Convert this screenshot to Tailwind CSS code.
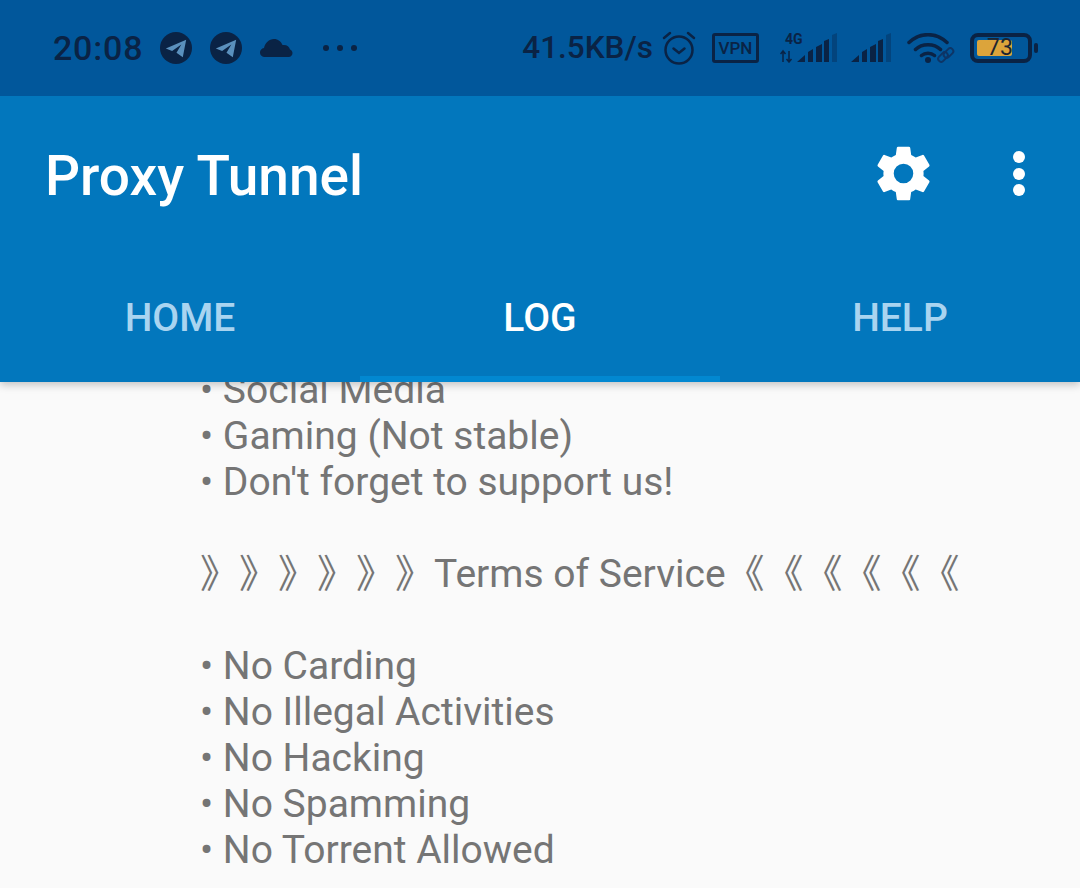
<!DOCTYPE html>
<html lang="en">
<head>
    <meta charset="UTF-8">
    <meta name="viewport" content="width=device-width, initial-scale=1.0">
    <title>Proxy Tunnel</title>
    <script src="https://cdn.jsdelivr.net/npm/@tailwindcss/browser@4"></script>
</head>
<body class="font-[Roboto,'Noto_Sans_CJK_SC',sans-serif] antialiased bg-[#fafafa] w-[1080px] h-[888px] overflow-hidden flex flex-col">
    <!-- Header -->
    <header class="relative z-10 shrink-0 shadow-[0_3px_8px_rgba(0,0,0,0.22)]">
        <!-- Status bar -->
        <div class="h-[96px] bg-[#01579b] flex items-center justify-between pl-[53px] pr-[42px] text-[#0a2345]">
            <div class="flex items-center">
                <span class="w-[89px] text-[34px] font-medium leading-none tracking-[0.8px] whitespace-nowrap">20:08</span>
                <svg class="ml-[18px]" width="32" height="32" viewBox="0 0 33 33"><circle cx="16.5" cy="16.5" r="16.5" fill="#0a2345"/><path d="M6 17 27 8 23.500 26 17 21.500 22 13 12.500 19.500Z" fill="#5a90bd"/></svg>
                <svg class="ml-[18px]" width="32" height="32" viewBox="0 0 33 33"><circle cx="16.5" cy="16.5" r="16.5" fill="#0a2345"/><path d="M6 17 27 8 23.500 26 17 21.500 22 13 12.500 19.500Z" fill="#5a90bd"/></svg>
                <svg class="ml-[18px]" width="33" height="20" viewBox="0 0 33 20"><path d="M5 19a4.500 4.500 0 0 1-1-9C5 5 9 1 14 1c4 0 7 2.500 8.500 6 .5 0 1-.1 1.500-.1 3 0 5.500 2 6 4.600 1.500.5 2.500 2 2.500 3.500 0 2.200-1.500 4-4 4Z" fill="#0a2345"/></svg>
                <div class="ml-[30px] flex gap-[8px]">
                    <span class="w-[6px] h-[6px] rounded-full bg-[#0a2345]"></span>
                    <span class="w-[6px] h-[6px] rounded-full bg-[#0a2345]"></span>
                    <span class="w-[6px] h-[6px] rounded-full bg-[#0a2345]"></span>
                </div>
            </div>
            <div class="flex items-center">
                <span class="text-[31.500px] font-medium leading-none">41.5KB/s</span>
                <svg class="ml-[9px]" width="34" height="34" viewBox="0 0 34 34" fill="none" stroke="#0a2345" stroke-width="2.500" stroke-linecap="round"><circle cx="17" cy="19" r="13.500"/><path d="M11.500 17.500 17 22l5.500-4.500M2 7l6-5M32 7l-6-5"/></svg>
                <div class="ml-[16px] w-[47px] h-[30px] border-[3px] border-[#0a2345] rounded-[3px] flex items-center justify-center text-[17px] font-medium leading-none">VPN</div>
                <!-- Signal 1 -->
                <div class="ml-[21px] relative w-[57px] h-[30px]">
                    <span class="absolute left-[5px] -top-[1px] text-[14px] font-bold leading-none">4G</span>
                    <svg class="absolute left-0 bottom-0" width="57" height="30" viewBox="0 0 57 30"><path d="M3 29V18M0.500 21l2.500-3 2.500 3M9 18v11M6.500 26l2.500 3 2.500-3" fill="none" stroke="#0a2345" stroke-width="1.500"/><path d="M17 29l8-7v7ZM28 29V19l5-3v13ZM36 29V14l6-3v18ZM44 29V8l5-2v23Z" fill="#0a2345"/><path d="M52 29V2l5-2v29Z" fill="#0a2345" fill-opacity="0.35"/></svg>
                </div>
                <svg class="ml-[14px]" width="40" height="30" viewBox="0 0 40 30"><path d="M0 29l8-7v7ZM11 29V19l5-3v13ZM19 29V14l6-3v18ZM27 29V8l5-2v23Z" fill="#0a2345"/><path d="M35 29V2l5-2v29Z" fill="#0a2345" fill-opacity="0.35"/></svg>
                <svg class="ml-[16px]" width="48" height="30" viewBox="0 0 48 30" fill="none" stroke="#0a2345" stroke-linecap="round">
                    <path d="M2 9.500C13-1 29-1 40 9.500M8.500 16.500C15 10 27 10 33.500 16.500M14.500 22.500c3.500-3 9.500-3 13 0" stroke-width="3.500"/>
                    <circle cx="21" cy="27" r="3" fill="#0a2345" stroke="none"/>
                    <rect x="30.500" y="21" width="11" height="6" rx="3" transform="rotate(-45 36 24)" stroke="#0d3566" stroke-width="2"/>
                    <rect x="36" y="17" width="11" height="6" rx="3" transform="rotate(-45 41.500 20)" stroke="#0d3566" stroke-width="2"/>
                </svg>
                <div class="ml-[15px] flex items-center">
                    <div class="w-[62px] h-[30px] border-[4px] border-[#0a2345] rounded-[8px] p-[3px] relative">
                        <div class="w-[35px] h-full bg-[#dca43b] rounded-[2px]"></div>
                        <span class="absolute left-[13px] top-[-1px] text-[23px] leading-[24px] text-[#1c2430]">73</span>
                    </div>
                    <div class="ml-[2px] w-[4px] h-[10px] rounded-[2px] bg-[#0a2345]"></div>
                </div>
            </div>
        </div>

        <!-- App bar -->
        <div class="bg-[#0277bd]">
            <div class="h-[160px] flex items-start justify-between pl-[45px] pr-[55px] pt-[47px]">
                <h1 class="text-[55px] font-medium text-white leading-[66px]">Proxy Tunnel</h1>
                <div class="flex items-center gap-[76px] -mt-[3px]">
                    <svg width="67" height="67" viewBox="0 0 24 24"><path fill="#fff" fill-rule="evenodd" d="M19.140 12.940c.04-.3.060-.61.060-.94s-.020-.64-.070-.94l2.030-1.580a.5.500 0 0 0 .12-.61l-1.920-3.320a.5.500 0 0 0-.59-.22l-2.390.96a7 7 0 0 0-1.620-.94l-.36-2.540a.5.500 0 0 0-.48-.41h-3.840a.5.500 0 0 0-.47.41l-.36 2.540a7.300 7.300 0 0 0-1.620.94l-2.390-.96a.5.500 0 0 0-.59.22L2.740 8.870a.5.500 0 0 0 .12.61l2.030 1.580c-.05.3-.09.63-.09.94s.02.64.07.94l-2.030 1.580a.5.500 0 0 0-.12.61l1.920 3.320c.12.22.37.29.59.22l2.390-.96c.5.380 1.030.7 1.620.94l.36 2.540c.05.24.24.41.48.41h3.840c.24 0 .44-.17.47-.41l.36-2.540a7 7 0 0 0 1.620-.94l2.390.96c.22.080.47 0 .59-.22l1.920-3.320a.5.500 0 0 0-.12-.61l-2.010-1.580ZM12 15.500a3.500 3.500 0 1 1 0-7 3.500 3.500 0 0 1 0 7Z"/></svg>
                    <div class="flex flex-col gap-[4.500px]">
                        <span class="w-[12px] h-[12px] rounded-full bg-white"></span>
                        <span class="w-[12px] h-[12px] rounded-full bg-white"></span>
                        <span class="w-[12px] h-[12px] rounded-full bg-white"></span>
                    </div>
                </div>
            </div>
            <!-- Tabs -->
            <nav class="grid grid-cols-3 h-[126px] text-[39px] font-medium text-center">
                <div class="pt-[37px] leading-[50px] text-[#a9d4f0]">HOME</div>
                <div class="pt-[37px] leading-[50px] text-white border-b-[6px] border-[#0288d1]">LOG</div>
                <div class="pt-[37px] leading-[50px] text-[#a9d4f0]">HELP</div>
            </nav>
        </div>
    </header>

    <!-- Log output, scrolled so the first line sits under the header -->
    <main class="flex-1 overflow-hidden pl-[200px] text-[39px] leading-[46px] text-[#757575]">
        <div class="-mt-[15px] whitespace-pre [text-spacing-trim:space-all]">• Social Media
• Gaming (Not stable)
• Don't forget to support us!

》》》》》》Terms of Service《《《《《《

• No Carding
• No Illegal Activities
• No Hacking
• No Spamming
• No Torrent Allowed</div>
    </main>
</body>
</html>
